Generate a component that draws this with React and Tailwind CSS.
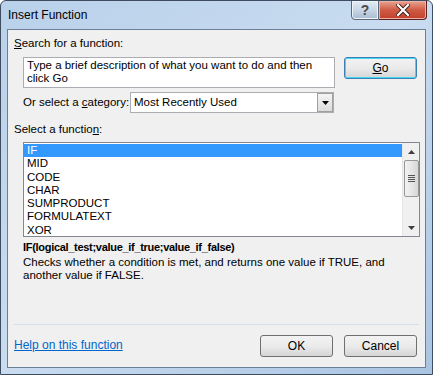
import React from "react";

const functions = ["IF", "MID", "CODE", "CHAR", "SUMPRODUCT", "FORMULATEXT", "XOR"];

function Btn({ children, focus, className = "" }) {
  return (
    <button
      className={
        "h-[22px] w-[73px] rounded-[3px] border text-[12px] text-black bg-gradient-to-b from-[#f2f2f2] via-[#ebebeb] to-[#d5d5d5] " +
        (focus ? "border-[#3c7fb1] shadow-[inset_0_0_0_1px_#48d5f8] " : "border-[#707070] ") +
        className
      }
    >
      {children}
    </button>
  );
}

export default function App() {
  return (
    <div
      className="w-[433px] h-[375px] relative overflow-hidden rounded-t-[6px] border border-[#3d4c5e] bg-gradient-to-br from-[#b9d1ea] via-[#c9dcf0] to-[#a9c4e2] px-[6px] pb-[6px] flex flex-col"
      style={{ fontFamily: '"Liberation Sans", Arial, sans-serif' }}
    >
      {/* title bar */}
      <div className="h-[28px] flex items-start relative">
        <span className="mt-[5px] ml-[1px] text-[12px] text-black">Insert Function</span>
        <div className="absolute right-[-1px] top-[-1px] flex">
          <div className="w-[28px] h-[20px] border border-[#5a6878] rounded-bl-[4px] bg-gradient-to-b from-[#e4ecf4] via-[#c8d6e5] to-[#a9bcd2] flex items-center justify-center text-[#4a4a4a] text-[14px] font-bold shadow-[inset_0_0_0_1px_#eef4fa]">
            ?
          </div>
          <div className="w-[48px] h-[20px] border border-l-0 border-[#5c2020] rounded-br-[4px] bg-gradient-to-b from-[#e8a493] via-[#cf5a44] to-[#c2402a] flex items-center justify-center shadow-[inset_0_0_0_1px_#e9b2a5]">
            <svg width="14" height="12" viewBox="0 0 14 12">
              <path d="M2 1 L12 11 M12 1 L2 11" stroke="#3a1a14" strokeWidth="4" strokeLinecap="square" />
              <path d="M2 1 L12 11 M12 1 L2 11" stroke="#fff" strokeWidth="2.2" strokeLinecap="square" />
            </svg>
          </div>
        </div>
      </div>

      {/* client area */}
      <div className="flex-1 border border-[#6b7f96] bg-[#f0f0f0] pl-[6px] pr-[6px] text-[11.5px] text-black flex flex-col">
        <div className="mt-[6px] h-[15px] leading-[15px]">
          <span className="underline">S</span>earch for a function:
        </div>

        <div className="mt-[6px] ml-[9px] flex items-start">
          <div className="w-[312px] h-[31px] border border-[#abadb3] bg-white px-[3px] pt-[1px] leading-[13px]">
            Type a brief description of what you want to do and then click Go
          </div>
          <Btn focus className="ml-[9px]">
            <span className="underline">G</span>o
          </Btn>
        </div>

        <div className="mt-[4px] ml-[9px] flex items-center h-[21px]">
          <span className="w-[107px] shrink-0 whitespace-nowrap">
            Or select a <span className="underline">c</span>ategory:
          </span>
          <div className="w-[204px] h-[21px] border border-[#abadb3] bg-white flex items-center">
            <span className="flex-1 pl-[3px]">Most Recently Used</span>
            <div className="w-[16px] h-[19px] border border-[#a0a0a0] bg-gradient-to-b from-[#f4f4f4] to-[#dcdcdc] flex items-center justify-center">
              <svg width="7" height="4" viewBox="0 0 7 4">
                <path d="M0 0 H7 L3.5 4 Z" fill="#000" />
              </svg>
            </div>
          </div>
        </div>

        <div className="mt-[9px] h-[15px] leading-[15px]">
          Select a functio<span className="underline">n</span>:
        </div>

        <div className="mt-[5px] ml-[9px] w-[397px] h-[95px] border border-[#828790] bg-white flex">
          <div className="flex-1 pt-[1px]">
            {functions.map((f, i) => (
              <div
                key={f}
                className={"h-[13.3px] leading-[13.3px] pl-[3px] " + (i === 0 ? "bg-[#3399ff] text-white" : "")}
              >
                {f}
              </div>
            ))}
          </div>
          <div className="w-[17px] bg-[#f0f0f0] flex flex-col items-center border-l border-[#e6e6e6]">
            <div className="h-[17px] flex items-center justify-center">
              <svg width="7" height="4" viewBox="0 0 7 4">
                <path d="M3.5 0 L7 4 H0 Z" fill="#404040" />
              </svg>
            </div>
            <div className="w-[15px] h-[37px] rounded-[2px] border border-[#979797] bg-gradient-to-r from-[#f2f2f2] via-[#e6e6e6] to-[#d6d6d6] flex flex-col items-center justify-center gap-[1px]">
              <div className="w-[7px] h-[1px] bg-[#555]" />
              <div className="w-[7px] h-[1px] bg-[#555]" />
              <div className="w-[7px] h-[1px] bg-[#555]" />
              <div className="w-[7px] h-[1px] bg-[#555]" />
            </div>
            <div className="flex-1" />
            <div className="h-[17px] flex items-center justify-center">
              <svg width="7" height="4" viewBox="0 0 7 4">
                <path d="M0 0 H7 L3.5 4 Z" fill="#404040" />
              </svg>
            </div>
          </div>
        </div>

        <div className="mt-[3px] ml-[9px] h-[15px] leading-[15px] font-bold text-[11px] tracking-[-0.3px]">
          IF(logical_test;value_if_true;value_if_false)
        </div>
        <div className="ml-[9px] mt-[1px] leading-[13px] w-[385px]">
          Checks whether a condition is met, and returns one value if TRUE, and another value if FALSE.
        </div>

        <div className="flex-1" />
        <div className="h-[1px] bg-[#d6dfe7]" />

        <div className="h-[42px] flex items-center">
          <span className="text-[#0066cc] underline mt-[-2px] text-[12px]">Help on this function</span>
          <div className="flex-1" />
          <Btn>OK</Btn>
          <Btn className="ml-[11px]">Cancel</Btn>
          <div className="w-[2px]" />
        </div>
      </div>
    </div>
  );
}
